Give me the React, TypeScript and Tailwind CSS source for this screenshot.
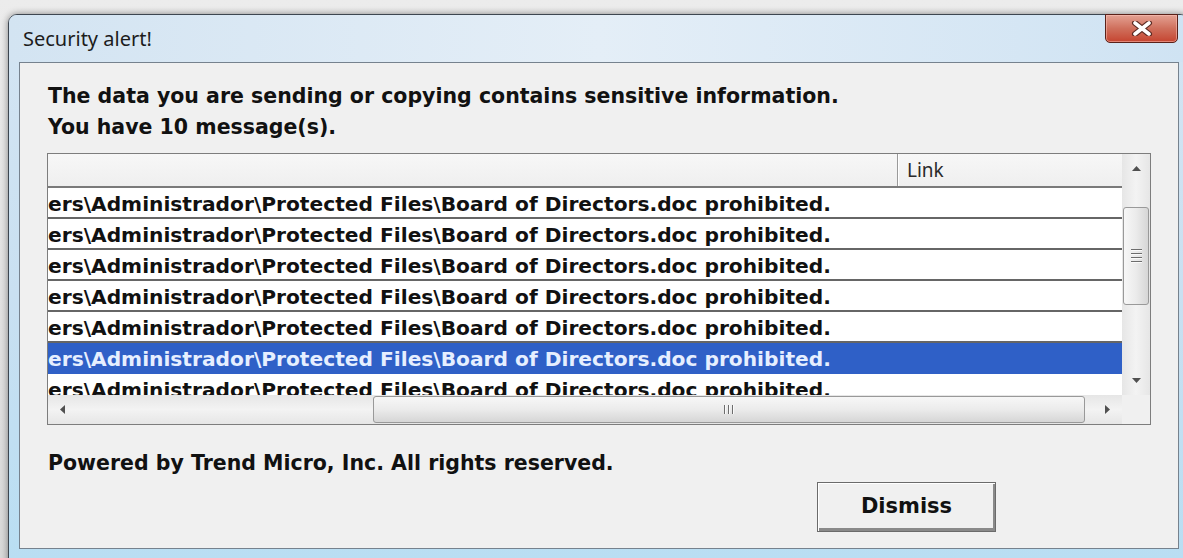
const MESSAGE = 'ers\\Administrador\\Protected Files\\Board of Directors.doc prohibited.';
const ROW_COUNT = 7;
const SELECTED_ROW = 5;

const BODY_FONT = "font-['DejaVu_Sans',sans-serif]";
const UI_FONT = "font-['Noto_Sans',sans-serif]";

function Arrow({ dir }: { dir: 'up' | 'down' | 'left' | 'right' }) {
  const vertical = dir === 'up' || dir === 'down';
  const points = {
    up: '0,5 4.5,0 9,5',
    down: '0,0 9,0 4.5,5',
    left: '5,0 5,9 0,4.5',
    right: '0,0 0,9 5,4.5',
  }[dir];
  return (
    <svg
      width={vertical ? 9 : 5}
      height={vertical ? 5 : 9}
      viewBox={vertical ? '0 0 9 5' : '0 0 5 9'}
    >
      <polygon points={points} fill="#505050" />
    </svg>
  );
}

function VerticalScrollbar() {
  return (
    <div className="flex flex-col bg-gradient-to-r from-[#e6e6e6] via-[#f3f3f3] to-[#e6e6e6]">
      <div className="h-[29px] flex items-center justify-center">
        <Arrow dir="up" />
      </div>
      <div className="flex-1 pt-[24px] px-[1px]">
        <div className="h-[98px] rounded-[3px] border border-[#999] bg-gradient-to-r from-[#f7f7f7] via-[#ebebeb] to-[#d6d6d6] flex flex-col items-center justify-center gap-[2px]">
          {[0, 1, 2, 3].map(i => (
            <div key={i} className="w-[11px] h-[2px] border-t border-[#6d6d6d] border-b border-b-[#fafafa]" />
          ))}
        </div>
      </div>
      <div className="h-[29px] flex items-center justify-center">
        <Arrow dir="down" />
      </div>
    </div>
  );
}

function HorizontalScrollbar() {
  return (
    <div className="flex bg-gradient-to-b from-[#e6e6e6] via-[#f3f3f3] to-[#e6e6e6]">
      <div className="w-[29px] flex items-center justify-center">
        <Arrow dir="left" />
      </div>
      <div className="flex-1 pl-[296px] py-[1px]">
        <div className="w-[712px] h-full rounded-[3px] border border-[#999] bg-gradient-to-b from-[#f7f7f7] via-[#ebebeb] to-[#d6d6d6] flex items-center justify-center gap-[2px]">
          {[0, 1, 2].map(i => (
            <div key={i} className="w-[2px] h-[9px] border-l border-[#6d6d6d] border-r border-r-[#fafafa]" />
          ))}
        </div>
      </div>
      <div className="w-[29px] flex items-center justify-center">
        <Arrow dir="right" />
      </div>
    </div>
  );
}

function MessageList() {
  return (
    <div className="w-[1104px] h-[272px] border border-[#7d7d7d] bg-white grid grid-cols-[1fr_28px] grid-rows-[1fr_29px]">
      <div className="flex flex-col overflow-hidden">
        {/* Column header */}
        <div className="h-[34px] shrink-0 flex bg-gradient-to-b from-[#f7f7f7] to-[#efefef] border-b-2 border-[#7a7a7a]">
          <div className="w-[850px] border-r border-[#9a9a9a]" />
          <div className={`flex-1 border-l border-white pl-[8px] flex items-center text-[19px] text-[#2a2a2a] ${UI_FONT}`}>
            Link
          </div>
        </div>

        {/* Rows */}
        {Array.from({ length: ROW_COUNT }).map((_, i) => {
          const selected = i === SELECTED_ROW;
          return (
            <div
              key={i}
              className={`h-[31px] shrink-0 border-b-2 whitespace-nowrap text-[20.2px] font-bold leading-[33px] ${BODY_FONT} ${
                selected
                  ? 'bg-[#2f60c7] border-[#2f60c7] text-[#e6efff]'
                  : 'bg-white border-[#666] text-[#111]'
              }`}
            >
              {MESSAGE}
            </div>
          );
        })}
      </div>
      <VerticalScrollbar />
      <HorizontalScrollbar />
      <div className="bg-[#f0f0f0]" />
    </div>
  );
}

function CloseButton() {
  return (
    <button className="absolute top-[-1px] right-[10px] w-[73px] h-[29px] rounded-b-[5px] border border-[#5a2119] bg-gradient-to-b from-[#e3a193] via-[#cf6f5c] to-[#c5432f] flex items-center justify-center shadow-[inset_0_0_0_1px_rgba(255,200,190,0.5)]">
      <svg width="24" height="15" viewBox="0 0 24 15">
        <path d="M5 2 L19 13 M19 2 L5 13" stroke="#5b2a22" strokeWidth="6" strokeLinecap="round" />
        <path d="M5 2 L19 13 M19 2 L5 13" stroke="#ffffff" strokeWidth="3.6" strokeLinecap="round" />
      </svg>
    </button>
  );
}

export default function App() {
  return (
    <div className="w-[1183px] h-[558px] overflow-hidden bg-gradient-to-b from-[#ececec] to-[#d9d9d9] pl-2 pt-[14px]">
      <div className="relative w-[1181px] h-[560px] rounded-t-[9px] border border-[#3d4650] bg-gradient-to-b from-[#d4e5f3] via-[#c9e0f1] to-[#b8def3] shadow-[0_0_7px_rgba(0,0,0,0.45)] flex flex-col">
        {/* Title bar */}
        <div className="h-[47px] shrink-0 flex items-center pl-[14px] bg-gradient-to-r from-[#d3e4f2] via-[#e4eef7] to-[#cfe3f3] rounded-t-[8px]">
          <span className={`text-[20px] text-[#1c1c1c] ${UI_FONT}`}>Security alert!</span>
        </div>
        <CloseButton />

        {/* Client area */}
        <div className="ml-[10px] w-[1160px] h-[487px] border border-[#76828e] bg-[#f0f0f0] pl-[27px] pt-[18px] flex flex-col">
          <div className={`pl-px text-[20.5px] font-bold leading-[31px] text-[#111] ${BODY_FONT}`}>
            <p>The data you are sending or copying contains sensitive information.</p>
            <p>You have 10 message(s).</p>
          </div>

          <div className="mt-[10px]">
            <MessageList />
          </div>

          <p className={`pl-px mt-[23px] text-[20.5px] font-bold leading-[31px] text-[#111] ${BODY_FONT}`}>
            Powered by Trend Micro, Inc. All rights reserved.
          </p>

          <div className="mt-[3px] pl-[770px]">
            <button
              className={`w-[179px] h-[50px] border border-[#6b6b6b] bg-[#f0f0f0] shadow-[inset_1px_1px_0_#ffffff,inset_-2px_-3px_0_#8a8a8a] text-[21px] font-bold text-[#111] ${BODY_FONT}`}
            >
              Dismiss
            </button>
          </div>
        </div>
      </div>
    </div>
  );
}
